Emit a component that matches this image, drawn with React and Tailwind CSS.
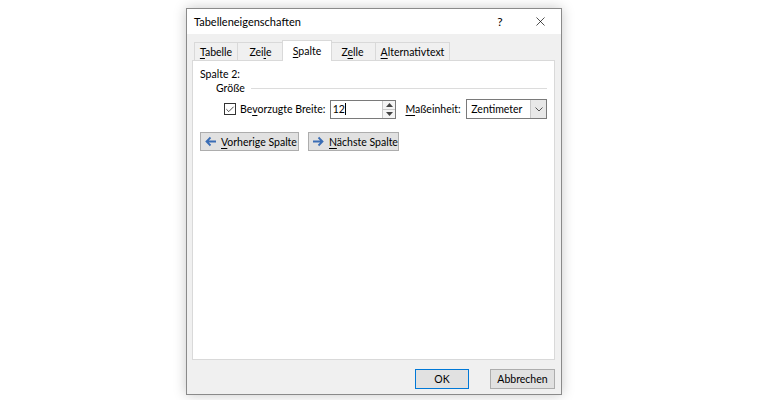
import { Check, X } from 'lucide-react';

const tabs = [
  { pre: '', key: 'T', post: 'abelle', w: 'w-[44px]' },
  { pre: 'Zei', key: 'l', post: 'e', w: 'w-[46px]' },
  { pre: '', key: 'S', post: 'palte', w: 'w-[50px]', active: true },
  { pre: 'Z', key: 'e', post: 'lle', w: 'w-[46px]' },
  { pre: '', key: 'A', post: 'lternativtext', w: 'w-[74px]' },
];

function Acc({ pre, k, post }) {
  return <>{pre}<span className="underline underline-offset-2">{k}</span>{post}</>;
}

function Arrow({ left }) {
  return (
    <svg width="13" height="11" viewBox="0 0 13 11" className={left ? 'shrink-0' : 'shrink-0 rotate-180'}>
      <path d="M12 5.5H2.5M6.5 1.5L2.5 5.5l4 4" fill="none" stroke="#3a6db5" strokeWidth="1.8" />
    </svg>
  );
}

export default function App() {
  return (
    <div className="w-[768px] h-[400px] bg-white pl-[186px] pt-[8px] text-[10.5px] leading-[14px] text-black whitespace-nowrap font-['Segoe_UI','Lato',sans-serif]">
      <div className="w-[376px] h-[387px] border border-[#8a8a8a] bg-[#f0f0f0] shadow-[0_0_12px_rgba(0,0,0,0.22)] flex flex-col">
        <div className="h-[25px] bg-white flex items-center pl-[7px]">
          <span className="flex-1 text-[11px]">Tabelleneigenschaften</span>
          <span className="w-[14px] text-center mr-[26px] text-[12px]">?</span>
          <X size={15} strokeWidth={1.1} className="mr-[13px]" />
        </div>
        <div className="flex items-end pl-[7px] h-[26px]">
          {tabs.map((t, i) => (
            <div key={i}
              className={t.active
                ? `${t.w} h-[21px] -mx-[2px] bg-white border border-b-0 border-[#d9d9d9] flex items-center justify-center relative z-10 mb-[-1px]`
                : `${t.w} h-[18px] bg-[#f0f0f0] border border-b-0 border-l-0 first:border-l border-[#d9d9d9] flex items-center justify-center`}>
              <span><Acc pre={t.pre} k={t.key} post={t.post} /></span>
            </div>
          ))}
        </div>
        <div className="ml-[5px] w-[363px] h-[300px] bg-white border border-[#d9d9d9] flex flex-col px-[7px] pt-[6px]">
          <div>Spalte 2:</div>
          <div className="flex items-center pl-[16px]">
            <span>Größe</span>
            <div className="flex-1 h-px bg-[#dcdcdc] ml-[6px]" />
          </div>
          <div className="flex items-center mt-[4px] pl-[24px] h-[20px]">
            <div className="w-[12px] h-[12px] border border-[#333] flex items-center justify-center shrink-0">
              <Check size={11} strokeWidth={1.7} />
            </div>
            <span className="ml-[4px] w-[90px]"><Acc pre="Be" k="v" post="orzugte Breite:" /></span>
            <div className="w-[67px] h-[19px] border border-[#7a7a7a] flex">
              <div className="flex-1 flex items-center pl-[2px]">12<span className="w-px h-[12px] bg-black" /></div>
              <div className="w-[13px] border-l border-[#c8c8c8] flex flex-col items-center justify-center gap-[2px] bg-[#f4f4f4]">
                <svg width="7" height="4" viewBox="0 0 7 4"><path d="M0 4h7L3.5 0z" fill="#444" /></svg>
                <div className="w-full h-px bg-[#c8c8c8]" />
                <svg width="7" height="4" viewBox="0 0 7 4"><path d="M0 0h7L3.5 4z" fill="#444" /></svg>
              </div>
            </div>
            <span className="ml-[9px] w-[61px]"><Acc pre="" k="M" post="aßeinheit:" /></span>
            <div className="w-[81px] h-[20px] border border-[#7a7a7a] flex">
              <div className="flex-1 flex items-center pl-[4px]">Zentimeter</div>
              <div className="w-[16px] border-l border-[#c8c8c8] bg-[#e8e8e8] flex items-center justify-center">
                <svg width="8" height="5" viewBox="0 0 8 5"><path d="M0.5 0.5L4 4l3.5-3.5" fill="none" stroke="#555" strokeWidth="1" /></svg>
              </div>
            </div>
          </div>
          <div className="flex mt-[13px] gap-[9px]">
            <button className="w-[99px] h-[19px] bg-[#e1e1e1] border border-[#adadad] flex items-center pl-[3px] gap-[4px]">
              <Arrow left />
              <span><Acc pre="" k="V" post="orherige Spalte" /></span>
            </button>
            <button className="w-[91px] h-[19px] bg-[#e1e1e1] border border-[#adadad] flex items-center pl-[3px] gap-[4px]">
              <Arrow />
              <span><Acc pre="" k="N" post="ächste Spalte" /></span>
            </button>
          </div>
        </div>
        <div className="flex justify-end pr-[6px] mt-[9px] gap-[21px]">
          <button className="w-[54px] h-[20px] bg-[#e1e1e1] border border-[#0078d7]">OK</button>
          <button className="w-[65px] h-[20px] bg-[#e1e1e1] border border-[#adadad]">Abbrechen</button>
        </div>
      </div>
    </div>
  );
}
